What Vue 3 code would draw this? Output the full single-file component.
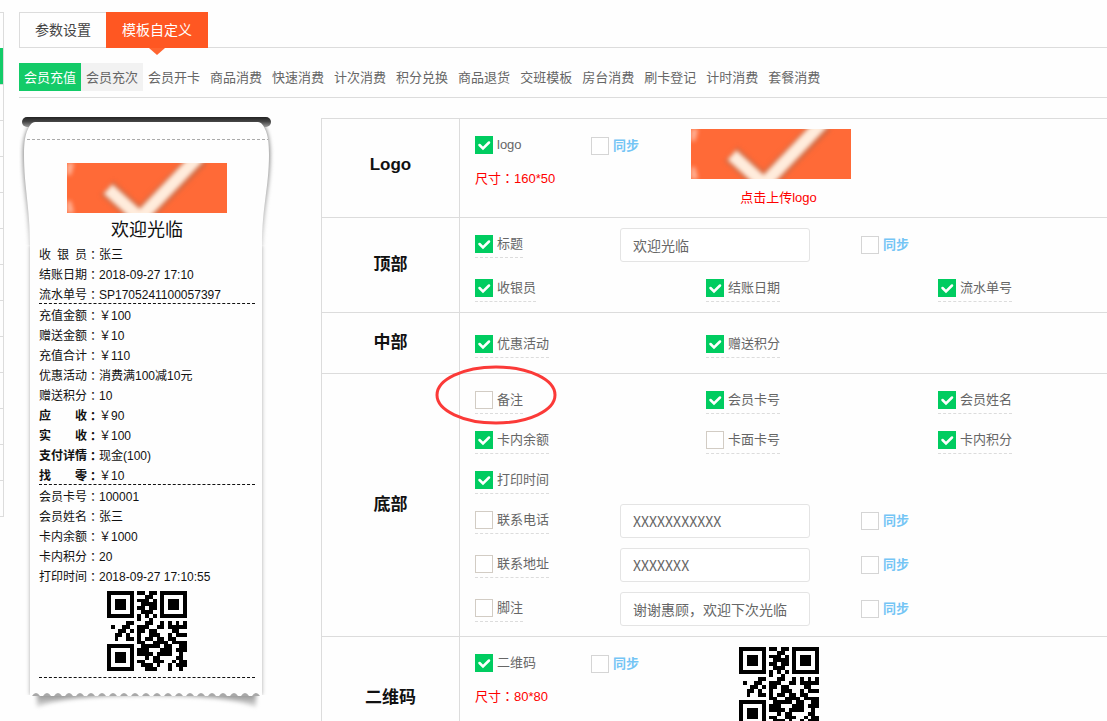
<script setup>
import { reactive, ref } from 'vue'

const sideRows = Array.from({ length: 14 }, (_, i) => i)

const subTabs = ['会员充值', '会员充次', '会员开卡', '商品消费', '快速消费', '计次消费', '积分兑换', '商品退货', '交班模板', '房台消费', '刷卡登记', '计时消费', '套餐消费']
const activeSub = ref(0)

const receipt = [
  [
    { label: '收银员', value: '张三' },
    { label: '结账日期', value: '2018-09-27 17:10' },
    { label: '流水单号', value: 'SP1705241100057397' },
  ],
  [
    { label: '充值金额', value: '￥100' },
    { label: '赠送金额', value: '￥10' },
    { label: '充值合计', value: '￥110' },
    { label: '优惠活动', value: '消费满100减10元' },
    { label: '赠送积分', value: '10' },
    { label: '应收', value: '￥90', bold: true },
    { label: '实收', value: '￥100', bold: true },
    { label: '支付详情', value: '现金(100)', bold: true },
    { label: '找零', value: '￥10', bold: true },
  ],
  [
    { label: '会员卡号', value: '100001' },
    { label: '会员姓名', value: '张三' },
    { label: '卡内余额', value: '￥1000' },
    { label: '卡内积分', value: '20' },
    { label: '打印时间', value: '2018-09-27 17:10:55' },
  ],
]

const sections = reactive([
  {
    title: 'Logo',
    media: 'logo',
    item: { label: 'logo', on: true },
    size: '160*50',
    sync: false,
  },
  {
    title: '顶部',
    lines: [
      { items: [{ label: '标题', on: true }], text: '欢迎光临', sync: false },
      { items: [{ label: '收银员', on: true }, { label: '结账日期', on: true }, { label: '流水单号', on: true }] },
    ],
  },
  {
    title: '中部',
    roomy: true,
    lines: [{ items: [{ label: '优惠活动', on: true }, { label: '赠送积分', on: true }] }],
  },
  {
    title: '底部',
    lines: [
      { items: [{ label: '备注', on: false, mark: true }, { label: '会员卡号', on: true }, { label: '会员姓名', on: true }] },
      { items: [{ label: '卡内余额', on: true }, { label: '卡面卡号', on: false }, { label: '卡内积分', on: true }] },
      { items: [{ label: '打印时间', on: true }] },
      { items: [{ label: '联系电话', on: false }], text: 'XXXXXXXXXXX', sync: false },
      { items: [{ label: '联系地址', on: false }], text: 'XXXXXXX', sync: false },
      { items: [{ label: '脚注', on: false }], text: '谢谢惠顾，欢迎下次光临', sync: false },
    ],
  },
  {
    title: '二维码',
    media: 'qr',
    item: { label: '二维码', on: true },
    size: '80*80',
    sync: false,
  },
])

const qrRows = [
  '111111101101101111111',
  '100000100011001000001',
  '101110101110101011101',
  '101110100111101011101',
  '101110101101101011101',
  '100000100111001000001',
  '111111101010101111111',
  '000000001001000000000',
  '000001100011001010101',
  '010011001110011011111',
  '000110101101100001100',
  '001101001001110010111',
  '001001101011011011000',
  '000000001100111101111',
  '111111100111110110011',
  '100000101110001110111',
  '101110101111011110010',
  '101110100010110000110',
  '101110101100111001011',
  '100000100111010010111',
  '111111100011100010010',
]
const qrPath = qrRows
  .map((row, y) => [...row].map((c, x) => (c === '1' ? `M${x} ${y}h1v1h-1z` : '')).join(''))
  .join('')

const notches = Array.from({ length: 21 }, (_, i) => 17 + i * 11)
</script>

<template>
  <div class="page">
    <aside class="side">
      <span v-for="i in sideRows" :key="i" class="side-row" :class="{ current: i === 1 }"></span>
    </aside>

    <main class="main">
      <nav class="tabs">
        <button type="button" class="tab">参数设置</button>
        <button type="button" class="tab active">模板自定义</button>
      </nav>

      <nav class="subtabs">
        <button
          v-for="(t, i) in subTabs"
          :key="t"
          type="button"
          class="subtab"
          :class="{ active: i === activeSub, hover: i === 1 && activeSub === 0 }"
          @click="activeSub = i"
        >{{ t }}</button>
      </nav>

      <div class="content">
        <section class="receipt">
          <svg class="paper-top" width="256" height="138" viewBox="0 0 256 138" aria-hidden="true">
            <defs>
              <linearGradient id="slot" x1="0" y1="0" x2="0" y2="1">
                <stop offset="0" stop-color="#222" />
                <stop offset="0.45" stop-color="#444" />
                <stop offset="1" stop-color="#999" />
              </linearGradient>
              <linearGradient id="fade" x1="0" y1="0" x2="0" y2="1">
                <stop offset="0" stop-color="#777" />
                <stop offset="0.5" stop-color="#999" />
                <stop offset="1" stop-color="#ccc" />
              </linearGradient>
            </defs>
            <path class="soft" fill="url(#fade)" d="M12 17C6 25 4 36 4 48C4 80 10 100 11 145H243C244 100 251 80 251 48C251 36 249 25 244 17Z" />
            <rect x="3" y="10" width="249" height="10" rx="5" fill="url(#slot)" />
            <path fill="#fefefe" d="M16 15Q12 15 9 22C6 28 5 36 5 48C5 80 11 100 11 138H243C243 100 250 80 250 48C250 36 249 28 246 22Q243 15 239 15Z" />
            <path d="M8 32.500H249" stroke="#aaa" stroke-dasharray="3 2" />
          </svg>
          <div class="paper-mid"></div>
          <svg class="paper-end" width="256" height="34" viewBox="0 0 256 34" aria-hidden="true">
            <defs>
              <linearGradient id="lift" x1="0" y1="0" x2="0" y2="1">
                <stop offset="0.3" stop-color="#888" />
                <stop offset="1" stop-color="#ddd" />
              </linearGradient>
            </defs>
            <path class="soft" fill="url(#lift)" d="M18 8H237V29Q210 17 128 17Q45 17 18 29Z" />
            <path fill="#fefefe" d="M11 0H243V18H11Z" />
            <path v-for="x in notches" :key="x" fill="#a8a8a8" :d="`M${x - 4} 18Q${x} 12 ${x + 4} 18Z`" />
          </svg>

          <div class="receipt-body">
            <svg class="logo" viewBox="0 0 160 50" role="img" aria-label="logo">
              <rect width="160" height="50" fill="#ff6a37" />
              <g class="logo-soft">
                <path d="M0 0H7L4 12H0Z M0 50H7L4 38H0Z" fill="#ffb59a" />
                <path d="M40 25L73 55L133 -6" fill="none" stroke="#d2663f" stroke-width="19" />
                <path d="M41 26L73 55L133 -8" fill="none" stroke="#ffecdc" stroke-width="13" />
              </g>
            </svg>
            <h2 class="receipt-title">欢迎光临</h2>
            <div v-for="(group, g) in receipt" :key="g" class="group">
              <p v-for="r in group" :key="r.label" class="entry">
                <span class="entry-label" :class="{ bold: r.bold }"><span v-for="c in r.label" :key="c">{{ c }}</span></span><span class="colon" :class="{ bold: r.bold }">：</span><span>{{ r.value }}</span>
              </p>
              <svg v-if="g === 2" class="qr" viewBox="0 0 21 21" shape-rendering="crispEdges" role="img" aria-label="二维码"><path :d="qrPath" /></svg>
            </div>
          </div>
        </section>

        <table class="settings">
          <tbody>
            <tr v-for="s in sections" :key="s.title">
              <th scope="row">{{ s.title }}</th>
              <td :class="{ roomy: s.roomy }">
                <div v-if="s.media" class="media-line">
                  <div>
                    <label class="item plain">
                      <span class="box"><input v-model="s.item.on" type="checkbox"><svg v-if="s.item.on" viewBox="0 0 18 18"><path d="M4.500 9L8 12.500L14 6.500" /></svg></span>
                      <span>{{ s.item.label }}</span>
                    </label>
                    <p class="size">尺寸<span class="colon">：</span>{{ s.size }}</p>
                  </div>
                  <label class="sync">
                    <span class="box"><input v-model="s.sync" type="checkbox"></span>
                    <span>同步</span>
                  </label>
                  <div class="media">
                    <template v-if="s.media === 'logo'">
                      <svg class="logo" viewBox="0 0 160 50" role="img" aria-label="logo">
                        <rect width="160" height="50" fill="#ff6a37" />
                        <g class="logo-soft">
                          <path d="M0 0H7L4 12H0Z M0 50H7L4 38H0Z" fill="#ffb59a" />
                          <path d="M40 25L73 55L133 -6" fill="none" stroke="#d2663f" stroke-width="19" />
                          <path d="M41 26L73 55L133 -8" fill="none" stroke="#ffecdc" stroke-width="13" />
                        </g>
                      </svg>
                      <button type="button" class="upload">点击上传logo</button>
                    </template>
                    <svg v-else class="qr-large" viewBox="0 0 21 21" shape-rendering="crispEdges" role="img" aria-label="二维码"><path :d="qrPath" /></svg>
                  </div>
                </div>
                <div v-for="(line, l) in s.lines" v-else :key="l" class="line" :class="{ fields: line.text !== undefined }">
                  <div v-for="it in line.items" :key="it.label" class="cell">
                    <label class="item">
                      <span class="box"><input v-model="it.on" type="checkbox"><svg v-if="it.on" viewBox="0 0 18 18"><path d="M4.500 9L8 12.500L14 6.500" /></svg></span>
                      <span>{{ it.label }}</span>
                    </label>
                    <svg v-if="it.mark" class="ring" viewBox="0 0 122 60" aria-hidden="true"><ellipse cx="61" cy="30" rx="59" ry="28" /></svg>
                  </div>
                  <template v-if="line.text !== undefined">
                    <input v-model="line.text" class="text" type="text" :aria-label="line.items[0].label">
                    <label class="sync">
                      <span class="box"><input v-model="line.sync" type="checkbox"></span>
                      <span>同步</span>
                    </label>
                  </template>
                </div>
              </td>
            </tr>
          </tbody>
        </table>
      </div>
    </main>
  </div>
</template>

<style>
body {
  background: #fefefe;
  overflow-x: hidden;
}
</style>

<style scoped>
.page {
  display: flex;
  align-items: flex-start;
  gap: 15px;
  font-family: "Liberation Sans", "Noto Sans CJK SC", sans-serif;
  font-size: 13px;
  color: #666;
}
button {
  font: inherit;
  color: inherit;
  background: none;
  border: 0;
  padding: 0;
  cursor: pointer;
}
p,
h2 {
  margin: 0;
}
svg {
  display: block;
}

.side {
  flex: none;
  width: 3px;
  margin-top: 12px;
  border: solid #dcdcdc;
  border-width: 0 1px 1px 0;
}
.side-row {
  display: block;
  box-sizing: border-box;
  height: 36px;
  border-top: 1px solid #dcdcdc;
}
.side-row.current {
  background: #13cb68;
  border-color: #13cb68;
}

.main {
  flex: 1;
  min-width: 0;
  padding-top: 12px;
}
.tabs {
  display: flex;
  height: 35px;
  border-bottom: 1px solid #dcdcdc;
}
.tab {
  height: 35px;
  padding: 0 15px 2px;
  border: solid #dcdcdc;
  border-width: 1px 0 0 1px;
  font-size: 14px;
  color: #444;
}
.tab.active {
  position: relative;
  height: 36px;
  padding: 0 16px 2px;
  border: 0;
  background: #ff5722;
  color: #fff;
}
.tab.active::after {
  content: "";
  position: absolute;
  top: 100%;
  left: 50%;
  margin-left: -8px;
  border: solid transparent;
  border-width: 7px 8px 0;
  border-top-color: #ff6430;
}
.subtabs {
  display: flex;
  padding: 15px 0 6px;
  border-bottom: 1px solid #dcdcdc;
}
.subtab {
  flex: none;
  height: 28px;
  padding: 0 5px 2px;
}
.subtab.hover {
  background: #f2f2f2;
}
.subtab.active {
  background: #13cb68;
  color: #fff;
}

.content {
  display: flex;
  align-items: flex-start;
  gap: 46px;
}

.receipt {
  position: relative;
  flex: none;
  width: 256px;
  margin-top: 9px;
}
.paper-top,
.paper-mid,
.paper-end {
  position: absolute;
  left: 0;
}
.paper-top {
  top: 0;
}
.paper-mid {
  top: 138px;
  bottom: 17px;
  left: 11px;
  width: 232px;
  box-shadow: 0 0 4px #aaa;
  clip-path: inset(0 -6px);
}
.paper-end {
  bottom: 0;
}
.soft {
  filter: blur(2px);
}
.receipt-body {
  position: relative;
  padding: 56px 20px 34px;
  color: #111;
  font-size: 12px;
}
.receipt-body .logo {
  margin: 0 auto;
}
.logo {
  width: 160px;
  height: 50px;
  overflow: hidden;
}
.logo-soft {
  filter: blur(2px);
}
.receipt-title {
  padding-top: 4px;
  font-size: 18px;
  font-weight: 400;
  line-height: 26px;
  text-align: center;
}
.group {
  border-bottom: 1px dashed #111;
}
.entry {
  display: flex;
  padding-top: 4px;
  line-height: 16px;
}
.entry-label {
  display: flex;
  justify-content: space-between;
  width: 48px;
}
.bold {
  font-weight: 700;
}
.colon {
  font-family: "Noto Sans CJK TC", sans-serif;
}
.qr {
  width: 80px;
  height: 80px;
  margin: 6px auto;
}

.settings {
  flex: 1;
  min-width: 0;
  margin-top: 20px;
  border-collapse: collapse;
}
.settings th,
.settings td {
  border: 1px solid #dcdcdc;
  border-right: 0;
}
.settings th {
  width: 137px;
  padding: 0 0 6px;
  font-size: 17px;
  color: #111;
}
.settings td {
  padding: 10px 15px;
}
.settings td.roomy {
  padding: 15px;
}

.line {
  display: grid;
  grid-template-columns: 231px 232px 1fr;
  align-items: start;
}
.line + .line {
  margin-top: 10px;
}
.line.fields {
  grid-template-columns: 145px 241px 1fr;
}
.cell {
  position: relative;
  display: flex;
}
.item,
.sync {
  display: inline-flex;
  gap: 4px;
  line-height: 18px;
  white-space: nowrap;
}
.item {
  padding: 7px 0 4px;
  border-bottom: 1px dashed #dcdcdc;
}
.item.plain {
  vertical-align: top;
  border-color: transparent;
}
.sync {
  padding-top: 8px;
  color: #74c5f5;
  font-weight: 700;
}
.box {
  display: grid;
  width: 18px;
  height: 18px;
}
.box > * {
  grid-area: 1 / 1;
}
.box input {
  appearance: none;
  box-sizing: border-box;
  width: 18px;
  height: 18px;
  margin: 0;
  border: 1px solid #d2ccc4;
  background: #fff;
}
.sync .box input {
  border-color: #d5d5d5;
}
.box input:checked {
  border-color: #00cc60;
  background: #00cc60;
}
.box svg {
  pointer-events: none;
}
.box path {
  fill: none;
  stroke: #fff;
  stroke-width: 2.500;
  stroke-linecap: round;
}
.text {
  box-sizing: border-box;
  width: 190px;
  height: 34px;
  padding: 0 12px;
  border: 1px solid #e4e4e4;
  border-radius: 3px;
  background: #fff;
  color: #666;
  font-family: "Noto Sans CJK SC", sans-serif;
  font-size: 14px;
}
.ring {
  position: absolute;
  top: -19px;
  left: -40px;
  width: 122px;
  height: 60px;
  pointer-events: none;
}
.ring ellipse {
  fill: none;
  stroke: #fb3a38;
  stroke-width: 3;
}

.media-line {
  display: grid;
  grid-template-columns: 116px 100px 175px;
  align-items: start;
}
.media {
  min-height: 78px;
}
.size {
  margin-top: 10px;
  line-height: 18px;
  color: #f00;
}
.upload {
  display: block;
  width: 100%;
  margin-top: 10px;
  line-height: 18px;
  color: #f00;
}
.qr-large {
  width: 80px;
  height: 80px;
  margin: 0 auto 23px;
}
</style>
